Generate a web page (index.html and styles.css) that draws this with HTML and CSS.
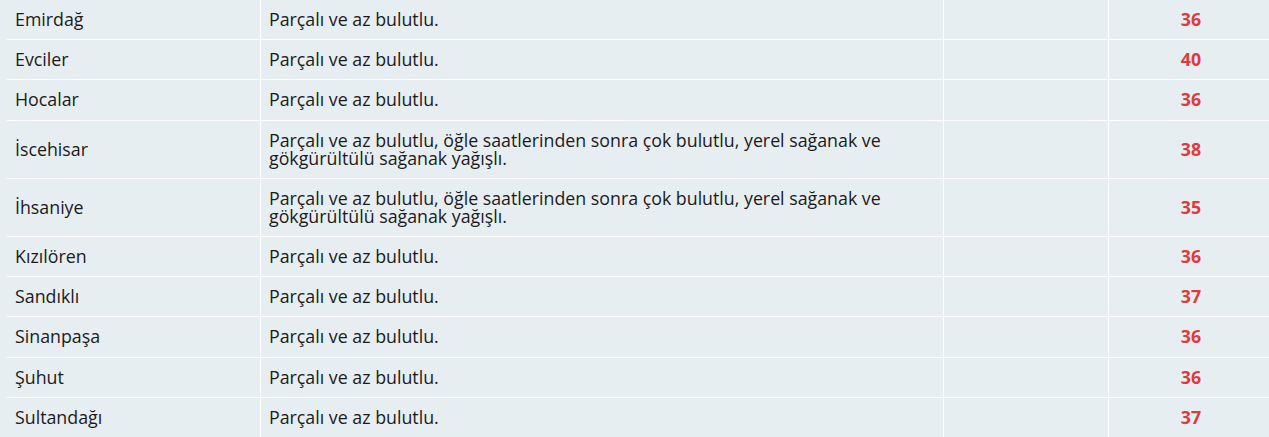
FILE: index.html
```html
<!DOCTYPE html>
<html lang="tr">
<head>
<meta charset="utf-8">
<title>Hava Durumu</title>
<link rel="stylesheet" href="styles.css">
</head>
<body>
<table class="forecast">
  <colgroup>
    <col class="c-name">
    <col class="c-desc">
    <col class="c-empty">
    <col class="c-temp">
  </colgroup>
  <tbody>
    <tr><td>Emirdağ</td><td>Parçalı ve az bulutlu.</td><td></td><td class="temp">36</td></tr>
    <tr><td>Evciler</td><td>Parçalı ve az bulutlu.</td><td></td><td class="temp">40</td></tr>
    <tr><td>Hocalar</td><td>Parçalı ve az bulutlu.</td><td></td><td class="temp">36</td></tr>
    <tr><td>İscehisar</td><td>Parçalı ve az bulutlu, öğle saatlerinden sonra çok bulutlu, yerel sağanak ve gökgürültülü sağanak yağışlı.</td><td></td><td class="temp">38</td></tr>
    <tr><td>İhsaniye</td><td>Parçalı ve az bulutlu, öğle saatlerinden sonra çok bulutlu, yerel sağanak ve gökgürültülü sağanak yağışlı.</td><td></td><td class="temp">35</td></tr>
    <tr><td>Kızılören</td><td>Parçalı ve az bulutlu.</td><td></td><td class="temp">36</td></tr>
    <tr><td>Sandıklı</td><td>Parçalı ve az bulutlu.</td><td></td><td class="temp">37</td></tr>
    <tr><td>Sinanpaşa</td><td>Parçalı ve az bulutlu.</td><td></td><td class="temp">36</td></tr>
    <tr><td>Şuhut</td><td>Parçalı ve az bulutlu.</td><td></td><td class="temp">36</td></tr>
    <tr><td>Sultandağı</td><td>Parçalı ve az bulutlu.</td><td></td><td class="temp">37</td></tr>
  </tbody>
</table>
</body>
</html>
```
FILE: styles.css
```css
html, body {
  margin: 0;
  padding: 0;
  background: #e7eef2;
  overflow: hidden;
}
body {
  font-family: "Open Sans", "DejaVu Sans", sans-serif;
  font-size: 17.8px;
  color: #1b1b1b;
}
.forecast {
  margin: 0 0 0 7px;
  width: 1267px;
  table-layout: fixed;
  border-collapse: separate;
  border-spacing: 0;
}
.c-name { width: 254px; }
.c-desc { width: 683px; }
.c-empty { width: 165px; }
.c-temp { width: 165px; }
.forecast td {
  box-sizing: border-box;
  padding: 10.1px 8px 11.1px;
  line-height: 18px;
  vertical-align: middle;
  border-right: 1px solid #ffffff;
  border-bottom: 1px solid #ffffff;
}
.forecast td.temp {
  text-align: center;
  font-weight: 700;
  color: #e03a3e;
}
```
